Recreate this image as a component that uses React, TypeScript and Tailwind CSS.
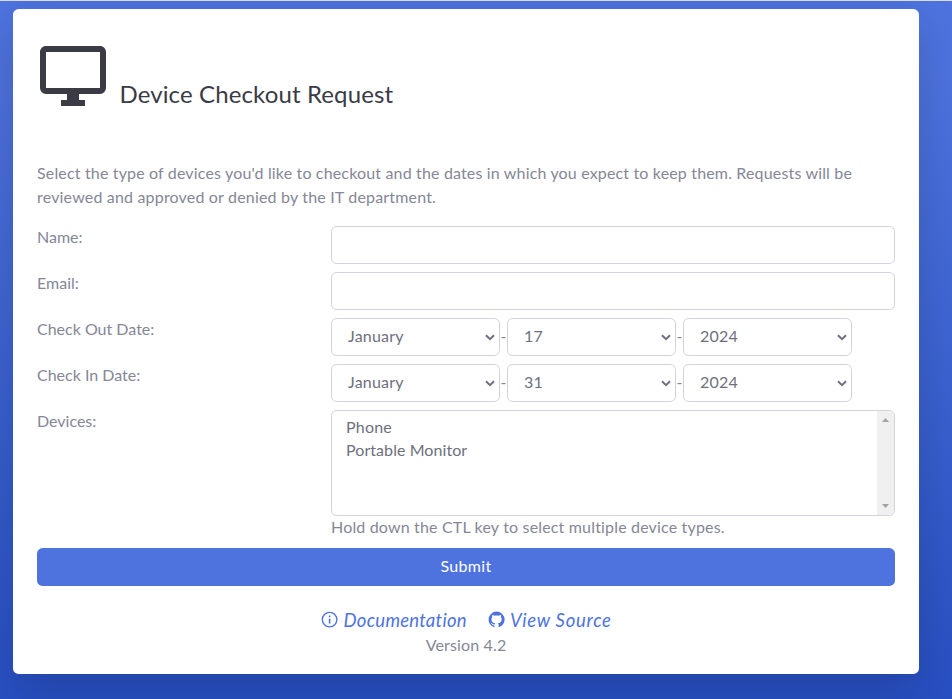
import React from "react";

function Chevron() {
  return (
    <svg className="h-[7px] w-[10px] shrink-0" viewBox="0 0 10 7" fill="none" stroke="#6e707e" strokeWidth="2">
      <path d="M1 1.2 5 5.2 9 1.2" />
    </svg>
  );
}

function Select({ value }: { value: string }) {
  return (
    <div className="flex h-[38px] w-[169px] items-center justify-between rounded-[5.6px] border border-[#d1d3e2] bg-white pr-1 pl-4 text-[#6e707e]">
      <span className="-mt-0.5 tracking-[0.2px]">{value}</span>
      <Chevron />
    </div>
  );
}

function DateFields({ parts }: { parts: string[] }) {
  return (
    <div className="flex items-center">
      {parts.map((part, i) => (
        <React.Fragment key={i}>
          {i > 0 && <span className="-mt-0.5 flex w-[7px] justify-center">-</span>}
          <Select value={part} />
        </React.Fragment>
      ))}
    </div>
  );
}

function Row({ label, children }: { label: string; children: React.ReactNode }) {
  return (
    <div className="mb-2 flex">
      <div className="-mt-px w-[294px] shrink-0">{label}</div>
      <div className="flex-1">{children}</div>
    </div>
  );
}

const inputClass =
  "block h-[38px] w-full rounded-[5.6px] border border-[#d1d3e2] bg-white px-3 text-[#6e707e] outline-none";

export default function App() {
  return (
    <div className="h-[699px] overflow-hidden border-t border-[#d9dde3] bg-linear-to-b from-[#4e73df] from-10% to-[#224abe] bg-[length:100%_790px] pt-2 pl-[13px] font-['Lato',sans-serif] text-base leading-6 text-[#858796]">
      <main className="h-[665px] w-[906px] rounded-[5.6px] bg-white px-6 pt-[31px] shadow-[0_16px_48px_rgba(0,0,0,0.175)]">
        <header className="flex h-[121px] text-[#3a3b45]">
          <svg className="size-[72px]" viewBox="0 0 24 24" fill="currentColor">
            <path d="M21,16H3V4H21M21,2H3C1.89,2 1,2.89 1,4V16A2,2 0 0,0 3,18H10V20H8V22H16V20H14V18H21A2,2 0 0,0 23,16V4C23,2.89 22.1,2 21,2Z" />
          </svg>
          <h1 className="mt-[39px] ml-[10.5px] text-2xl leading-[29px] tracking-[0.12px]">Device Checkout Request</h1>
        </header>
        <p className="mb-[17px] whitespace-nowrap tracking-[0.16px]">
          Select the type of devices you'd like to checkout and the dates in which you expect to keep them. Requests will be
          <br />
          <span className="tracking-[0.18px]">reviewed and approved or denied by the IT department.</span>
        </p>
        <Row label="Name:">
          <input className={inputClass} />
        </Row>
        <Row label="Email:">
          <input className={inputClass} />
        </Row>
        <Row label="Check Out Date:">
          <DateFields parts={["January", "17", "2024"]} />
        </Row>
        <Row label="Check In Date:">
          <DateFields parts={["January", "31", "2024"]} />
        </Row>
        <Row label="Devices:">
          <div className="flex h-[106px] justify-between overflow-hidden rounded-[5.6px] border border-[#d1d3e2] text-[#6e707e]">
            <div className="pt-1 pl-[14px] leading-[23px]">
              <div className="tracking-[0.2px]">Phone</div>
              <div className="tracking-[0.07px]">Portable Monitor</div>
            </div>
            <div className="flex w-[17px] flex-col items-center justify-between bg-[#f0f0f0] py-[7px]">
              <svg className="h-1 w-[7px]" viewBox="0 0 7 4" fill="#a3a3a3">
                <path d="M0 4 3.5 0 7 4Z" />
              </svg>
              <svg className="h-1 w-[7px]" viewBox="0 0 7 4" fill="#a3a3a3">
                <path d="M0 0 3.5 4 7 0Z" />
              </svg>
            </div>
          </div>
          <div className="-mt-px mb-px tracking-[0.17px]">Hold down the CTL key to select multiple device types.</div>
        </Row>
        <button className="block h-[38px] w-full rounded-[5.6px] bg-[#4e73df] pb-[3px] tracking-[0.3px] text-white">Submit</button>
        <footer className="mt-[21px] flex flex-col items-center">
          <div className="flex h-[26px] items-center gap-5 text-[18.5px] text-[#4e73df] italic">
            <a className="flex items-center gap-1">
              <svg className="size-[19.2px]" viewBox="0 0 24 24" fill="none" stroke="currentColor">
                <circle cx="12" cy="12" r="9.1" strokeWidth="1.7" />
                <path d="M12 11V17M12 7V9" strokeWidth="2" />
              </svg>
              <span className="tracking-[0.25px]">Documentation</span>
            </a>
            <a className="flex items-center gap-1">
              <svg className="size-[19.2px]" viewBox="0 0 24 24" fill="currentColor">
                <path d="M12,2A10,10 0 0,0 2,12C2,16.42 4.87,20.17 8.84,21.5C9.34,21.58 9.5,21.27 9.5,21C9.5,20.77 9.5,20.14 9.5,19.31C6.73,19.91 6.14,17.97 6.14,17.97C5.68,16.81 5.03,16.5 5.03,16.5C4.12,15.88 5.1,15.9 5.1,15.9C6.1,15.97 6.63,16.93 6.63,16.93C7.5,18.45 8.97,18 9.54,17.76C9.63,17.11 9.89,16.67 10.17,16.42C7.95,16.17 5.62,15.31 5.62,11.5C5.62,10.39 6,9.5 6.65,8.79C6.55,8.54 6.2,7.5 6.75,6.15C6.75,6.15 7.59,5.88 9.5,7.17C10.29,6.95 11.15,6.84 12,6.84C12.85,6.84 13.71,6.95 14.5,7.17C16.41,5.88 17.25,6.15 17.25,6.15C17.8,7.5 17.45,8.54 17.35,8.79C18,9.5 18.38,10.39 18.38,11.5C18.38,15.32 16.04,16.16 13.81,16.41C14.17,16.72 14.5,17.33 14.5,18.26C14.5,19.6 14.5,20.68 14.5,21C14.5,21.27 14.66,21.59 15.17,21.5C19.14,20.16 22,16.42 22,12A10,10 0 0,0 12,2Z" />
              </svg>
              <span className="tracking-[0.7px]">View Source</span>
            </a>
          </div>
          <div className="tracking-[0.15px]">Version 4.2</div>
        </footer>
      </main>
    </div>
  );
}
